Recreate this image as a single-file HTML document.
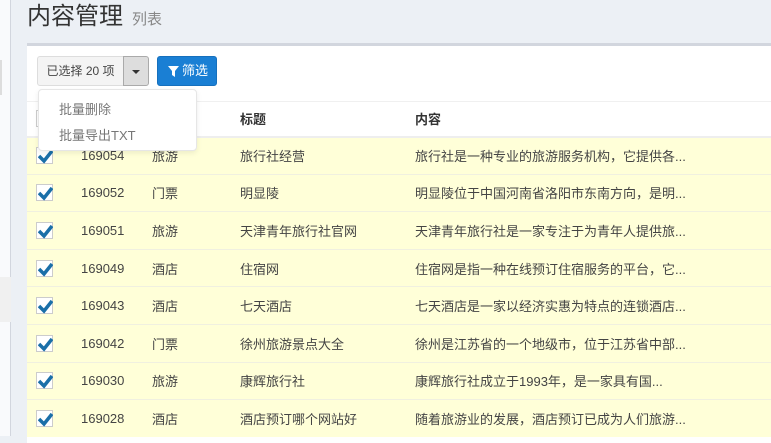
<!DOCTYPE html><html><head><meta charset="utf-8"><style>
*{margin:0;padding:0;box-sizing:border-box}
body{width:771px;height:436px;overflow:hidden;background:#ecf0f5;font-family:"Liberation Sans","Noto Sans CJK SC",sans-serif;font-size:13px;color:#333;position:relative}
.side{position:absolute;left:0;top:0;width:11px;height:436px;background:#f9fafc;border-right:1px solid #d2d6de}
.sb{position:absolute;left:0;top:277px;width:11px;height:45px;background:#f0f0f0}
.sb2{position:absolute;left:0;top:60px;width:2px;height:35px;background:#ddd}
h1{position:absolute;left:27px;top:-4px;font-size:24px;font-weight:normal;color:#333;font-family:"Liberation Sans","Noto Sans CJK SC",sans-serif}
h1 small{font-size:15px;color:#888;margin-left:9px}
.box{position:absolute;left:27px;top:43px;width:760px;height:400px;background:#fff;border-top:3px solid #d2d6de}
.btn1{position:absolute;left:37px;top:56px;width:87px;height:30px;background:#f4f4f4;border:1px solid #ddd;border-radius:3px 0 0 3px;font-size:12px;color:#444;line-height:28px;text-align:center}
.btn2{position:absolute;left:123px;top:56px;width:26px;height:30px;background:#ddd;border:1px solid #aaa;border-radius:0 3px 3px 0}
.btn2:after{content:"";position:absolute;left:8px;top:13px;border:4px solid transparent;border-top:4px solid #333}
.btn3{position:absolute;left:157px;top:56px;width:60px;height:30px;background:#1a7fd4;border:1px solid #1670bd;border-radius:3px;color:#fff;font-size:13px;line-height:28px;padding-left:24px}
.btn3 svg{position:absolute;left:10px;top:9px}
table{position:absolute;left:27px;top:101px;width:760px;border-collapse:collapse}
th{height:35px;text-align:left;font-weight:bold;border-top:1px solid #f0f0f0;border-bottom:2px solid #eee}
td{height:37.6px;background:#ffffd8;border-top:1px solid #f0f0e0;color:#444}
th,td{padding:0;white-space:nowrap}
.c0{width:54px;padding-left:9px}.c1{width:71px}.c2{width:88px}.c3{width:175px}
.cb{display:inline-block;width:17px;height:17px;border:1px solid #ccc;background:#fff;position:relative;vertical-align:middle}
.cb svg{position:absolute;left:1px;top:1px}
.menu{position:absolute;left:38px;top:89px;width:159px;height:62px;background:#fff;border:1px solid #e6e6e6;border-radius:4px;box-shadow:0 2px 6px rgba(0,0,0,.08);color:#777;font-size:13px}
.menu div{position:absolute;left:20px}
</style></head><body>
<div class="side"></div><div class="sb"></div><div class="sb2"></div>
<h1>内容管理<small>列表</small></h1>
<div class="box"></div>
<div class="btn1">已选择 20 项</div><div class="btn2"></div>
<div class="btn3"><svg width="11" height="11" viewBox="0 0 11 11"><path d="M0 0H11L7 5V11L4 9V5Z" fill="#fff"/></svg>筛选</div>
<table>
<tr><th class="c0"><span class="cb"></span></th><th class="c1"></th><th class="c2">业务</th><th class="c3">标题</th><th>内容</th></tr>
<tr><td class="c0"><span class="cb"><svg width="15" height="15" viewBox="0 0 15 15"><path d="M1 7L6 12L14 2" stroke="#1a6fa8" stroke-width="3.5" fill="none"/></svg></span></td><td>169054</td><td>旅游</td><td>旅行社经营</td><td>旅行社是一种专业的旅游服务机构，它提供各...</td></tr>
<tr><td class="c0"><span class="cb"><svg width="15" height="15" viewBox="0 0 15 15"><path d="M1 7L6 12L14 2" stroke="#1a6fa8" stroke-width="3.5" fill="none"/></svg></span></td><td>169052</td><td>门票</td><td>明显陵</td><td>明显陵位于中国河南省洛阳市东南方向，是明...</td></tr>
<tr><td class="c0"><span class="cb"><svg width="15" height="15" viewBox="0 0 15 15"><path d="M1 7L6 12L14 2" stroke="#1a6fa8" stroke-width="3.5" fill="none"/></svg></span></td><td>169051</td><td>旅游</td><td>天津青年旅行社官网</td><td>天津青年旅行社是一家专注于为青年人提供旅...</td></tr>
<tr><td class="c0"><span class="cb"><svg width="15" height="15" viewBox="0 0 15 15"><path d="M1 7L6 12L14 2" stroke="#1a6fa8" stroke-width="3.5" fill="none"/></svg></span></td><td>169049</td><td>酒店</td><td>住宿网</td><td>住宿网是指一种在线预订住宿服务的平台，它...</td></tr>
<tr><td class="c0"><span class="cb"><svg width="15" height="15" viewBox="0 0 15 15"><path d="M1 7L6 12L14 2" stroke="#1a6fa8" stroke-width="3.5" fill="none"/></svg></span></td><td>169043</td><td>酒店</td><td>七天酒店</td><td>七天酒店是一家以经济实惠为特点的连锁酒店...</td></tr>
<tr><td class="c0"><span class="cb"><svg width="15" height="15" viewBox="0 0 15 15"><path d="M1 7L6 12L14 2" stroke="#1a6fa8" stroke-width="3.5" fill="none"/></svg></span></td><td>169042</td><td>门票</td><td>徐州旅游景点大全</td><td>徐州是江苏省的一个地级市，位于江苏省中部...</td></tr>
<tr><td class="c0"><span class="cb"><svg width="15" height="15" viewBox="0 0 15 15"><path d="M1 7L6 12L14 2" stroke="#1a6fa8" stroke-width="3.5" fill="none"/></svg></span></td><td>169030</td><td>旅游</td><td>康辉旅行社</td><td>康辉旅行社成立于1993年，是一家具有国...</td></tr>
<tr><td class="c0"><span class="cb"><svg width="15" height="15" viewBox="0 0 15 15"><path d="M1 7L6 12L14 2" stroke="#1a6fa8" stroke-width="3.5" fill="none"/></svg></span></td><td>169028</td><td>酒店</td><td>酒店预订哪个网站好</td><td>随着旅游业的发展，酒店预订已成为人们旅游...</td></tr>
</table>
<div class="menu"><div style="top:9px">批量删除</div><div style="top:35px">批量导出TXT</div></div>
</body></html>
